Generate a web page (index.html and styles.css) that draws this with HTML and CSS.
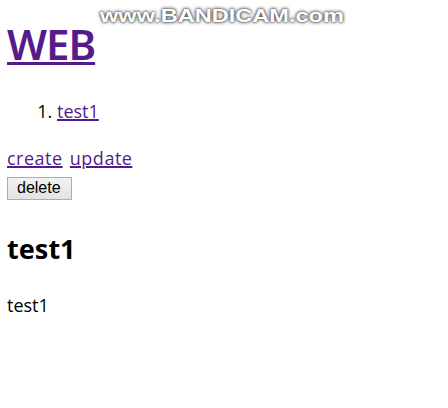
FILE: index.html
```html
<!DOCTYPE html>
<html>
<head>
<meta charset="utf-8">
<title>WEB</title>
<link rel="stylesheet" href="styles.css">
</head>
<body>
<h1 class="title"><a href="#">WEB</a></h1>
<ol class="list">
  <li><a href="#">test1</a></li>
</ol>
<p class="actions"><a href="#">create</a> <a href="#">update</a></p>
<form class="del-form"><button type="button" class="btn">delete</button></form>
<h2 class="heading">test1</h2>
<p class="desc">test1</p>
<div class="watermark">www.BANDICAM.com</div>
</body>
</html>
```
FILE: styles.css
```css
html, body {
  background: #fff;
}
body {
  margin: 0;
  padding: 0 7px;
  font-family: "Open Sans", "Noto Sans", sans-serif;
  font-size: 18px;
  line-height: 24px;
  color: #000;
}
a {
  color: #551a8b;
  text-decoration-thickness: 2px;
}
.title {
  margin: 19px 0 0;
  font-family: "Noto Sans", sans-serif;
  font-size: 42px;
  line-height: 50px;
  font-weight: 600;
  letter-spacing: -1px;
}
.title a {
  text-decoration-thickness: 3px;
}
.list {
  margin: 30px 0 0;
  padding-left: 50px;
}
.actions {
  margin: 23px 0 4px;
  word-spacing: 2px;
  letter-spacing: 0.5px;
}
.del-form {
  height: 23px;
  margin: 0;
}
.btn {
  height: 23px;
  padding: 0 10px 0 9px;
  font-family: "Liberation Sans", Arial, sans-serif;
  font-size: 16px;
  color: #000;
  background: linear-gradient(#f2f2f2, #e3e3e3);
  border: 1px solid #adadad;
  border-radius: 0;
}
.heading {
  margin: 35.5px 0 0;
  font-family: "Noto Sans", sans-serif;
  font-size: 27px;
  line-height: 32px;
  font-weight: 700;
}
.desc {
  margin: 28.5px 0 0;
}
.watermark {
  position: absolute;
  top: 4px;
  left: 100px;
  font-family: "Liberation Sans", Arial, sans-serif;
  font-weight: 700;
  font-size: 19px;
  line-height: 24px;
  color: #fff;
  white-space: nowrap;
  transform: scaleX(1.24);
  transform-origin: left top;
  text-shadow: 0 0 2px #444, 0 0 3px #666, 0 0 4px #999;
}
```
